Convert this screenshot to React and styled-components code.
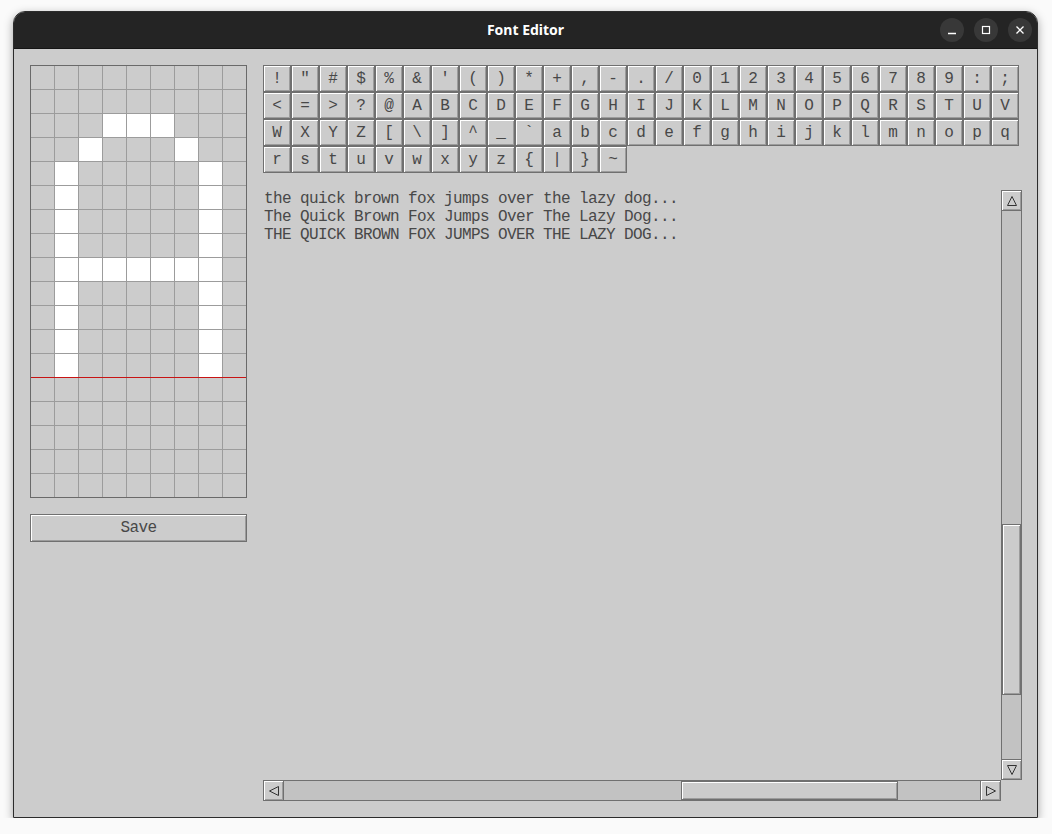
import React from 'react'
import styled, { createGlobalStyle, css } from 'styled-components'

const GlobalStyle = createGlobalStyle`
  body {
    margin: 0;
    background: #fafafa;
    font-family: "Liberation Mono", "DejaVu Sans Mono", monospace;
  }
  * { box-sizing: border-box; }
`

// 9 x 18 glyph, 1 = lit pixel
const GLYPH = [
  '000000000',
  '000000000',
  '000111000',
  '001000100',
  '010000010',
  '010000010',
  '010000010',
  '010000010',
  '011111110',
  '010000010',
  '010000010',
  '010000010',
  '010000010',
  '000000000',
  '000000000',
  '000000000',
  '000000000',
  '000000000',
]

const CHARS = []
for (let c = 33; c <= 126; c++) CHARS.push(String.fromCharCode(c))

const SAMPLE = [
  'the quick brown fox jumps over the lazy dog...',
  'The Quick Brown Fox Jumps Over The Lazy Dog...',
  'THE QUICK BROWN FOX JUMPS OVER THE LAZY DOG...',
]

const bevel = css`
  border: 1px solid #707070;
  background: #cccccc;
  box-shadow: inset 1px 1px 0 #ffffff, inset -1px -1px 0 #9c9c9c;
`

const Window = styled.div`
  margin: 11px 0 0 13px;
  width: 1025px;
  height: 807px;
  border: 1px solid #2c2c2c;
  border-radius: 12px 12px 0 0;
  overflow: hidden;
  display: flex;
  flex-direction: column;
  box-shadow: 0 3px 10px rgba(0, 0, 0, 0.35);
`

const TitleBar = styled.div`
  height: 37px;
  flex: none;
  background: #242424;
  border-bottom: 1px solid #151515;
  display: flex;
  align-items: center;
  justify-content: center;
  position: relative;
`

const Title = styled.div`
  color: #ffffff;
  font-family: "Noto Sans", "Open Sans", sans-serif;
  font-weight: 700;
  font-size: 14px;
  margin-top: -1px;
`

const Controls = styled.div`
  position: absolute;
  right: 5px;
  top: 6px;
  display: flex;
  gap: 10px;
`

const CtlButton = styled.div`
  width: 24px;
  height: 24px;
  border-radius: 50%;
  background: #383838;
  display: flex;
  align-items: center;
  justify-content: center;
`

const Body = styled.div`
  flex: 1;
  background: #cccccc;
  padding: 16px;
  display: flex;
  gap: 16px;
`

const LeftPanel = styled.div`
  width: 217px;
  display: flex;
  flex-direction: column;
  gap: 16px;
`

const GlyphGrid = styled.div`
  position: relative;
  display: grid;
  grid-template-columns: repeat(9, 23px);
  grid-auto-rows: 23px;
  gap: 1px;
  background: #9c9c9c;
  border: 1px solid #6a6a6a;
  width: 217px;
`

const Cell = styled.div`
  background: ${p => (p.$on ? '#ffffff' : '#cccccc')};
`

const Baseline = styled.div`
  position: absolute;
  left: 0;
  right: 0;
  top: 311px;
  height: 1px;
  background: #c81414;
`

const monoText = css`
  font-family: "Liberation Mono", "DejaVu Sans Mono", monospace;
  font-size: 16px;
  letter-spacing: -0.6px;
  color: #484848;
`

const SaveButton = styled.button`
  ${bevel};
  ${monoText};
  width: 217px;
  height: 28px;
  padding: 0;
`

const RightPanel = styled.div`
  width: 759px;
  display: flex;
  flex-direction: column;
  gap: 17px;
`

const CharMap = styled.div`
  width: 756px;
  display: flex;
  flex-wrap: wrap;
`

const CharButton = styled.div`
  ${bevel};
  ${monoText};
  letter-spacing: 0;
  width: 28px;
  height: 27px;
  display: flex;
  align-items: center;
  justify-content: center;
`

const ScrollArea = styled.div`
  display: grid;
  grid-template-columns: 738px 21px;
  grid-template-rows: 590px 21px;
`

const TextView = styled.div`
  ${monoText};
  padding: 0 0 0 1px;
  line-height: 18px;
  white-space: pre;
  overflow: hidden;
`

const VScroll = styled.div`
  display: flex;
  flex-direction: column;
  border: 1px solid #707070;
  background: #c2c2c2;
`

const HScroll = styled.div`
  display: flex;
  border: 1px solid #707070;
  background: #c2c2c2;
`

const Arrow = styled.div`
  ${bevel};
  flex: none;
  width: ${p => (p.$h ? '20px' : '100%')};
  height: ${p => (p.$h ? '100%' : '20px')};
  border: none;
  ${p => (p.$end
    ? (p.$h ? 'border-left: 1px solid #707070;' : 'border-top: 1px solid #707070;')
    : (p.$h ? 'border-right: 1px solid #707070;' : 'border-bottom: 1px solid #707070;'))}
  display: flex;
  align-items: center;
  justify-content: center;
`

const Gap = styled.div`
  flex: none;
  ${p => (p.$h ? `width: ${p.$size}px;` : `height: ${p.$size}px;`)}
`

const Thumb = styled.div`
  ${bevel};
  flex: none;
  ${p => (p.$h ? `width: ${p.$size}px;` : `height: ${p.$size}px;`)}
`

const Tri = ({ dir }) => {
  const pts = {
    up: '6,1.5 1.5,10.5 10.5,10.5',
    down: '1.5,1.5 10.5,1.5 6,10.5',
    left: '1.5,6 10.5,1.5 10.5,10.5',
    right: '1.5,1.5 1.5,10.5 10.5,6',
  }[dir]
  return (
    <svg width="12" height="12" viewBox="0 0 12 12">
      <polygon points={pts} fill="none" stroke="#333" strokeWidth="1" />
    </svg>
  )
}

export default function App() {
  return (
    <>
      <GlobalStyle />
      <Window>
        <TitleBar>
          <Title>Font Editor</Title>
          <Controls>
            <CtlButton>
              <svg width="12" height="12" viewBox="0 0 12 12">
                <path d="M2 9.5h8" stroke="#fff" strokeWidth="1.3" />
              </svg>
            </CtlButton>
            <CtlButton>
              <svg width="12" height="12" viewBox="0 0 12 12">
                <rect x="2.5" y="2.5" width="7" height="7" fill="none" stroke="#fff" strokeWidth="1.2" />
              </svg>
            </CtlButton>
            <CtlButton>
              <svg width="12" height="12" viewBox="0 0 12 12">
                <path d="M2.5 2.5l7 7M9.5 2.5l-7 7" stroke="#fff" strokeWidth="1.3" />
              </svg>
            </CtlButton>
          </Controls>
        </TitleBar>
        <Body>
          <LeftPanel>
            <GlyphGrid>
              {GLYPH.map((row, y) =>
                row.split('').map((v, x) => <Cell key={y + '-' + x} $on={v === '1'} />)
              )}
              <Baseline />
            </GlyphGrid>
            <SaveButton>Save</SaveButton>
          </LeftPanel>
          <RightPanel>
            <CharMap>
              {CHARS.map(ch => (
                <CharButton key={ch}>{ch}</CharButton>
              ))}
            </CharMap>
            <ScrollArea>
              <TextView>{SAMPLE.join('\n')}</TextView>
              <VScroll>
                <Arrow><Tri dir="up" /></Arrow>
                <Gap $size={313} />
                <Thumb $size={171} />
                <Gap style={{ flex: 1 }} />
                <Arrow $end><Tri dir="down" /></Arrow>
              </VScroll>
              <HScroll>
                <Arrow $h><Tri dir="left" /></Arrow>
                <Gap $h $size={397} />
                <Thumb $h $size={217} />
                <Gap style={{ flex: 1 }} />
                <Arrow $h $end><Tri dir="right" /></Arrow>
              </HScroll>
              <div />
            </ScrollArea>
          </RightPanel>
        </Body>
      </Window>
    </>
  )
}
